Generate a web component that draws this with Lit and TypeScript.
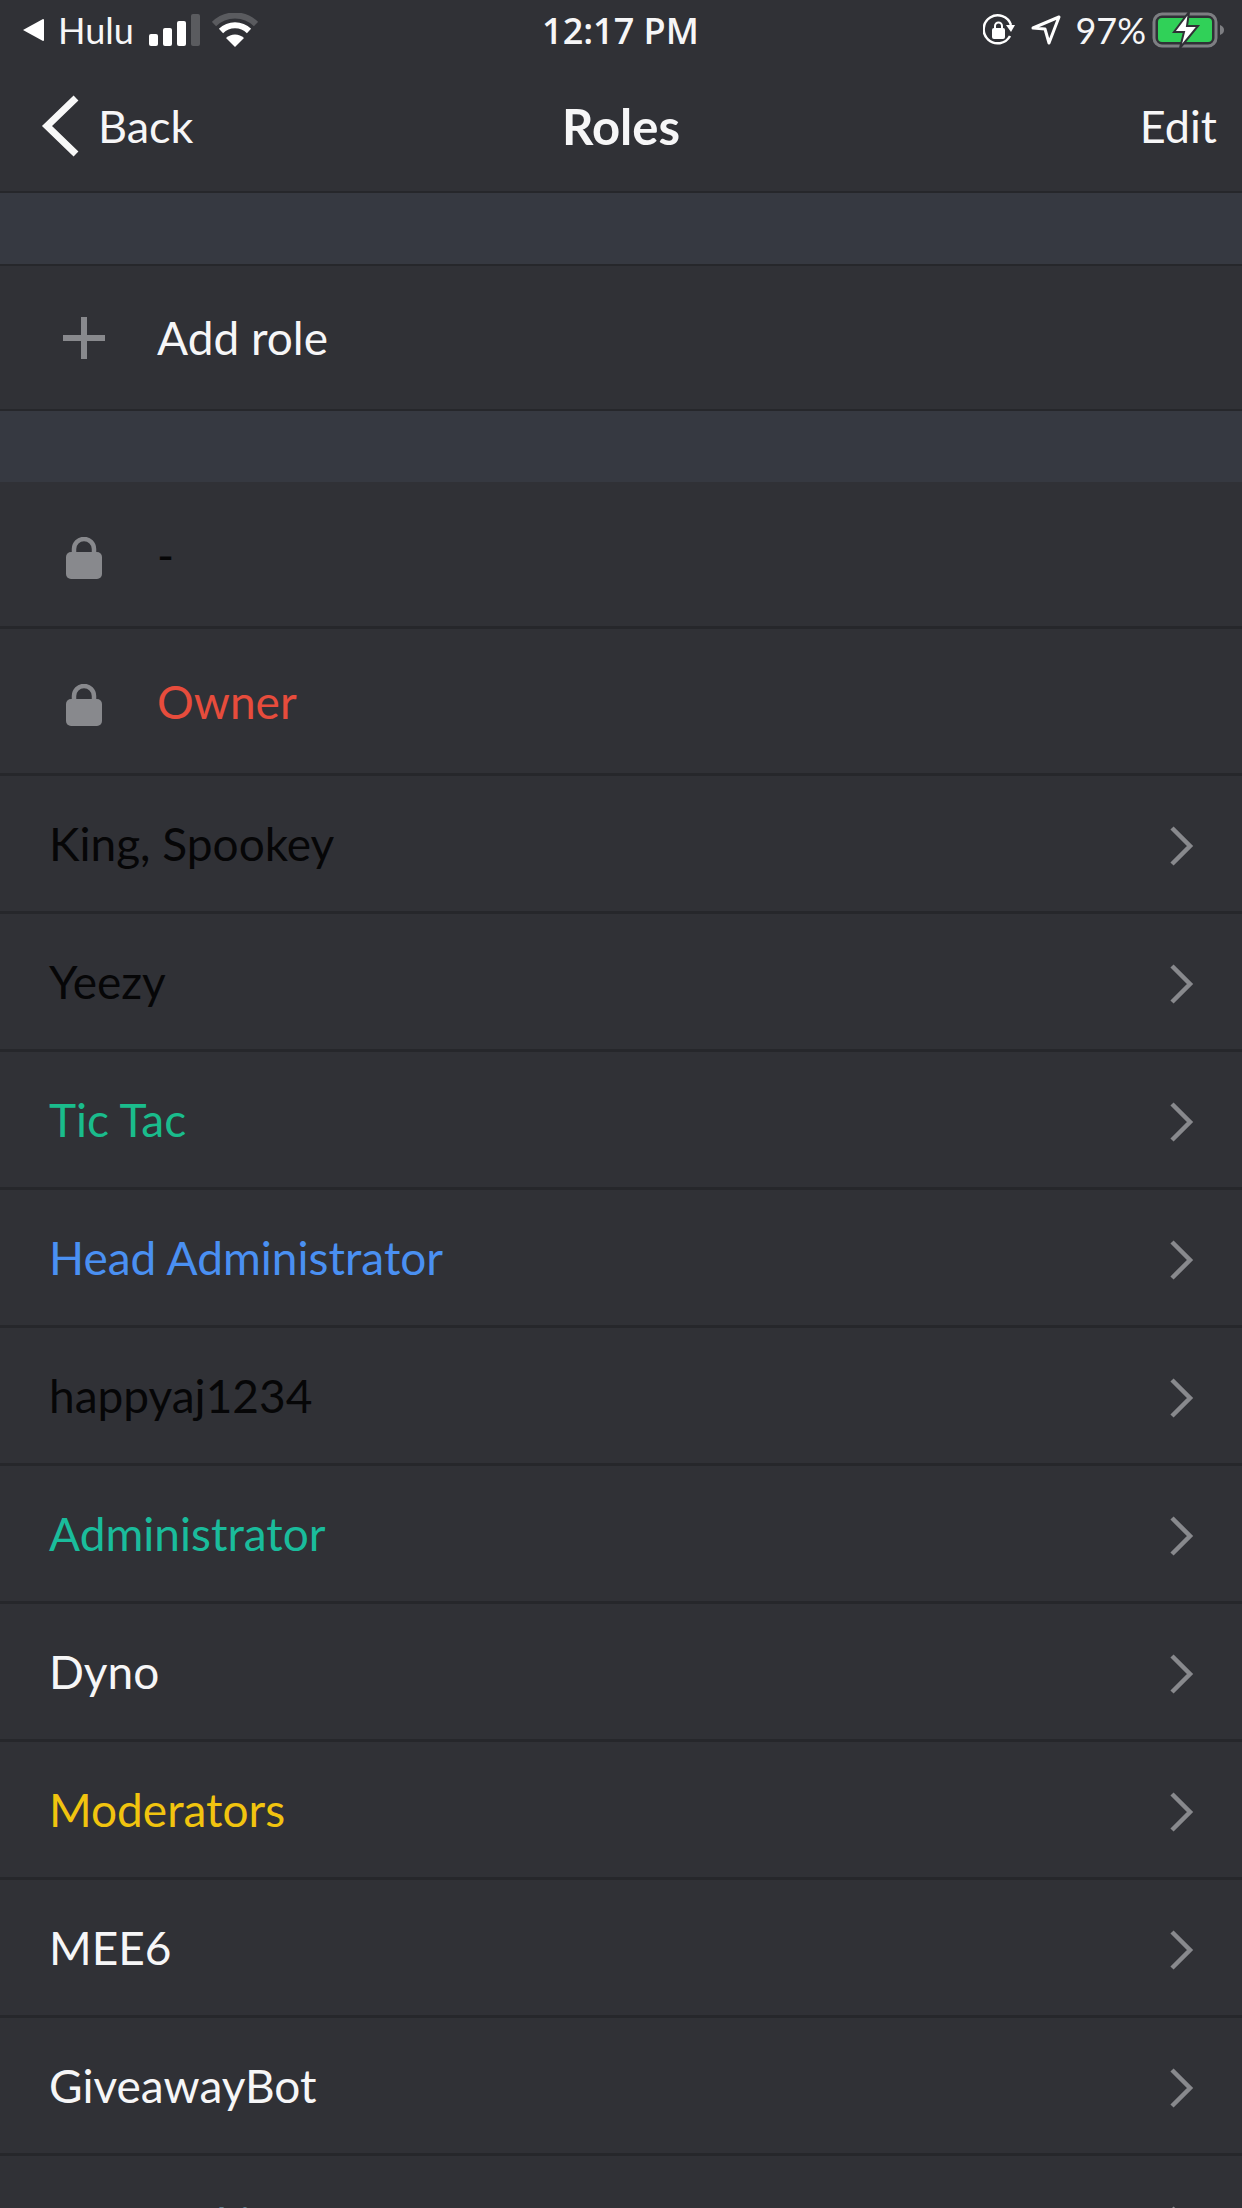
import { LitElement, css, html, svg } from "lit";
import { customElement } from "lit/decorators.js";

type Role = { name: string; color: string };

const LOCKED: Role[] = [
  { name: "-", color: "#060607" },
  { name: "Owner", color: "#e74c3c" }
];

const ROLES: Role[] = [
  { name: "King, Spookey", color: "#060607" },
  { name: "Yeezy", color: "#060607" },
  { name: "Tic Tac", color: "#1abc8c" },
  { name: "Head Administrator", color: "#4a90f2" },
  { name: "happyaj1234", color: "#060607" },
  { name: "Administrator", color: "#1abc9c" },
  { name: "Dyno", color: "#f6f6f7" },
  { name: "Moderators", color: "#f1c40f" },
  { name: "MEE6", color: "#f6f6f7" },
  { name: "GiveawayBot", color: "#f6f6f7" },
  { name: "Tatsumaki", color: "#607d8b" }
];

const lockIcon = svg`<svg class="lock" width="36" height="42" viewBox="0 0 36 42">
  <path d="M8 18v-6a10 10 0 0 1 20 0v6" fill="none" stroke="#88898d" stroke-width="4.5"/>
  <rect x="0" y="15" width="36" height="27" rx="5" fill="#88898d"/>
</svg>`;

const chevron = svg`<svg class="chevron" width="24" height="40" viewBox="0 0 24 40">
  <path d="M2 2l18 18L2 38" fill="none" stroke="#88898d" stroke-width="4.5"/>
</svg>`;

@customElement("app-root")
export class AppRoot extends LitElement {
  static styles = css`
    :host {
      display: block;
      height: 2208px;
      overflow: hidden;
      background: #303136;
      color: #f6f6f7;
      font-family: Lato, "Open Sans", sans-serif;
    }

    .status {
      display: grid;
      grid-template-columns: 1fr auto 1fr;
      align-items: center;
      height: 60px;
      padding: 0 16px 0 22px;
      font-size: 36px;
    }

    .status-side {
      display: flex;
      align-items: center;
    }

    .status-side.right {
      justify-content: flex-end;
    }

    .carrier {
      margin: 0 15px 0 14px;
    }

    .wifi {
      margin-left: 12px;
    }

    .time {
      font-family: "Open Sans", sans-serif;
      font-weight: 600;
      font-size: 36px;
      margin-right: 7px;
    }

    .location {
      margin-left: 16px;
    }

    .pct {
      margin: 0 6px 0 14px;
    }

    .nav {
      display: grid;
      grid-template-columns: 1fr auto 1fr;
      align-items: center;
      height: 133px;
      padding: 0 25px;
      box-sizing: border-box;
      border-bottom: 2px solid #26272b;
      font-size: 45px;
    }

    .back {
      display: flex;
      align-items: center;
      gap: 19px;
      margin-left: 16px;
    }

    .title {
      font-weight: 700;
      font-size: 49px;
    }

    .edit {
      justify-self: end;
    }

    .band {
      height: 71px;
      background: #363941;
    }

    .row {
      display: flex;
      align-items: center;
      box-sizing: border-box;
      border-bottom: 3px solid #26272b;
      font-size: 46px;
    }

    .row.add {
      height: 147px;
      padding-left: 63px;
      border-top: 2px solid #26272b;
      border-bottom: 2px solid #26272b;
    }

    .row.locked {
      height: 147px;
      padding-left: 66px;
    }

    .row.link {
      height: 138px;
      padding: 0 48px 0 49px;
      justify-content: space-between;
    }

    .add-icon {
      width: 94px;
      display: flex;
    }

    .lock-icon {
      width: 91px;
      display: flex;
    }

    .plus {
      width: 42px;
      height: 42px;
    }

    .lock {
      margin-top: 7px;
    }

    .chevron {
      margin-top: 4px;
    }
  `;

  protected render() {
    return html`
      <div class="status">
        <div class="status-side">
          <svg width="22" height="24" viewBox="0 0 22 24"><path d="M1 12L21 1q1 0 1 1v20q0 1-1 1z" fill="#fff" /></svg>
          <span class="carrier">Hulu</span>
          <svg width="51" height="32" viewBox="0 0 51 32">
            <rect x="0" y="20" width="9" height="12" rx="2" fill="#fff" />
            <rect x="14" y="14" width="9" height="18" rx="2" fill="#fff" />
            <rect x="28" y="7" width="9" height="25" rx="2" fill="#fff" />
            <rect x="42" y="0" width="9" height="32" rx="2" fill="#5a5b5f" />
          </svg>
          <svg class="wifi" width="46" height="34" viewBox="0 0 46 34">
            <path d="M2 11a30 30 0 0 1 42 0" fill="none" stroke="#5a5b5f" stroke-width="6" />
            <path d="M9 18a20 20 0 0 1 28 0" fill="none" stroke="#fff" stroke-width="6" />
            <path d="M14 25l9 9 9-9a13 13 0 0 0-18 0z" fill="#fff" />
          </svg>
        </div>
        <div class="time">12:17 PM</div>
        <div class="status-side right">
          <svg width="32" height="32" viewBox="0 0 32 32">
            <path d="M27 22a14 14 0 1 1 1-11" fill="none" stroke="#fff" stroke-width="2.5" />
            <path d="M23 11h9l-4 7z" fill="#fff" />
            <rect x="9" y="14" width="13" height="11" rx="2" fill="#fff" />
            <path d="M12 15v-3a3.5 3.5 0 0 1 7 0v3" fill="none" stroke="#fff" stroke-width="2" />
          </svg>
          <svg class="location" width="30" height="30" viewBox="0 0 30 30">
            <path d="M2 13L28 2 18 28l-4-14z" fill="none" stroke="#fff" stroke-width="3" stroke-linejoin="round" />
          </svg>
          <span class="pct">97%</span>
          <svg width="74" height="36" viewBox="0 0 74 36">
            <rect x="2" y="2" width="62" height="32" rx="8" fill="none" stroke="#7d7e82" stroke-width="3" />
            <path d="M68 13c3 1 4 3 4 5s-1 4-4 5z" fill="#7d7e82" />
            <rect x="6" y="6" width="54" height="24" rx="4" fill="#30d158" />
            <path d="M37 0L22 20h10l-4 16 18-22H35z" fill="#fff" stroke="#303136" stroke-width="2" />
          </svg>
        </div>
      </div>
      <div class="nav">
        <div class="back">
          <svg width="38" height="62" viewBox="0 0 38 62"><path d="M35 3L6 31l29 28" fill="none" stroke="#f8f8f8" stroke-width="7" /></svg>
          <span>Back</span>
        </div>
        <div class="title">Roles</div>
        <div class="edit">Edit</div>
      </div>
      <div class="band"></div>
      <div class="row add">
        <div class="add-icon">
          <svg class="plus" viewBox="0 0 42 42"><path d="M21 0v42M0 21h42" stroke="#88898d" stroke-width="6" /></svg>
        </div>
        <span>Add role</span>
      </div>
      <div class="band"></div>
      ${LOCKED.map(
        (role) => html`
          <div class="row locked">
            <div class="lock-icon">${lockIcon}</div>
            <span style="color:${role.color}">${role.name}</span>
          </div>
        `
      )}
      ${ROLES.map(
        (role) => html`
          <div class="row link">
            <span style="color:${role.color}">${role.name}</span>
            ${chevron}
          </div>
        `
      )}
    `;
  }
}
